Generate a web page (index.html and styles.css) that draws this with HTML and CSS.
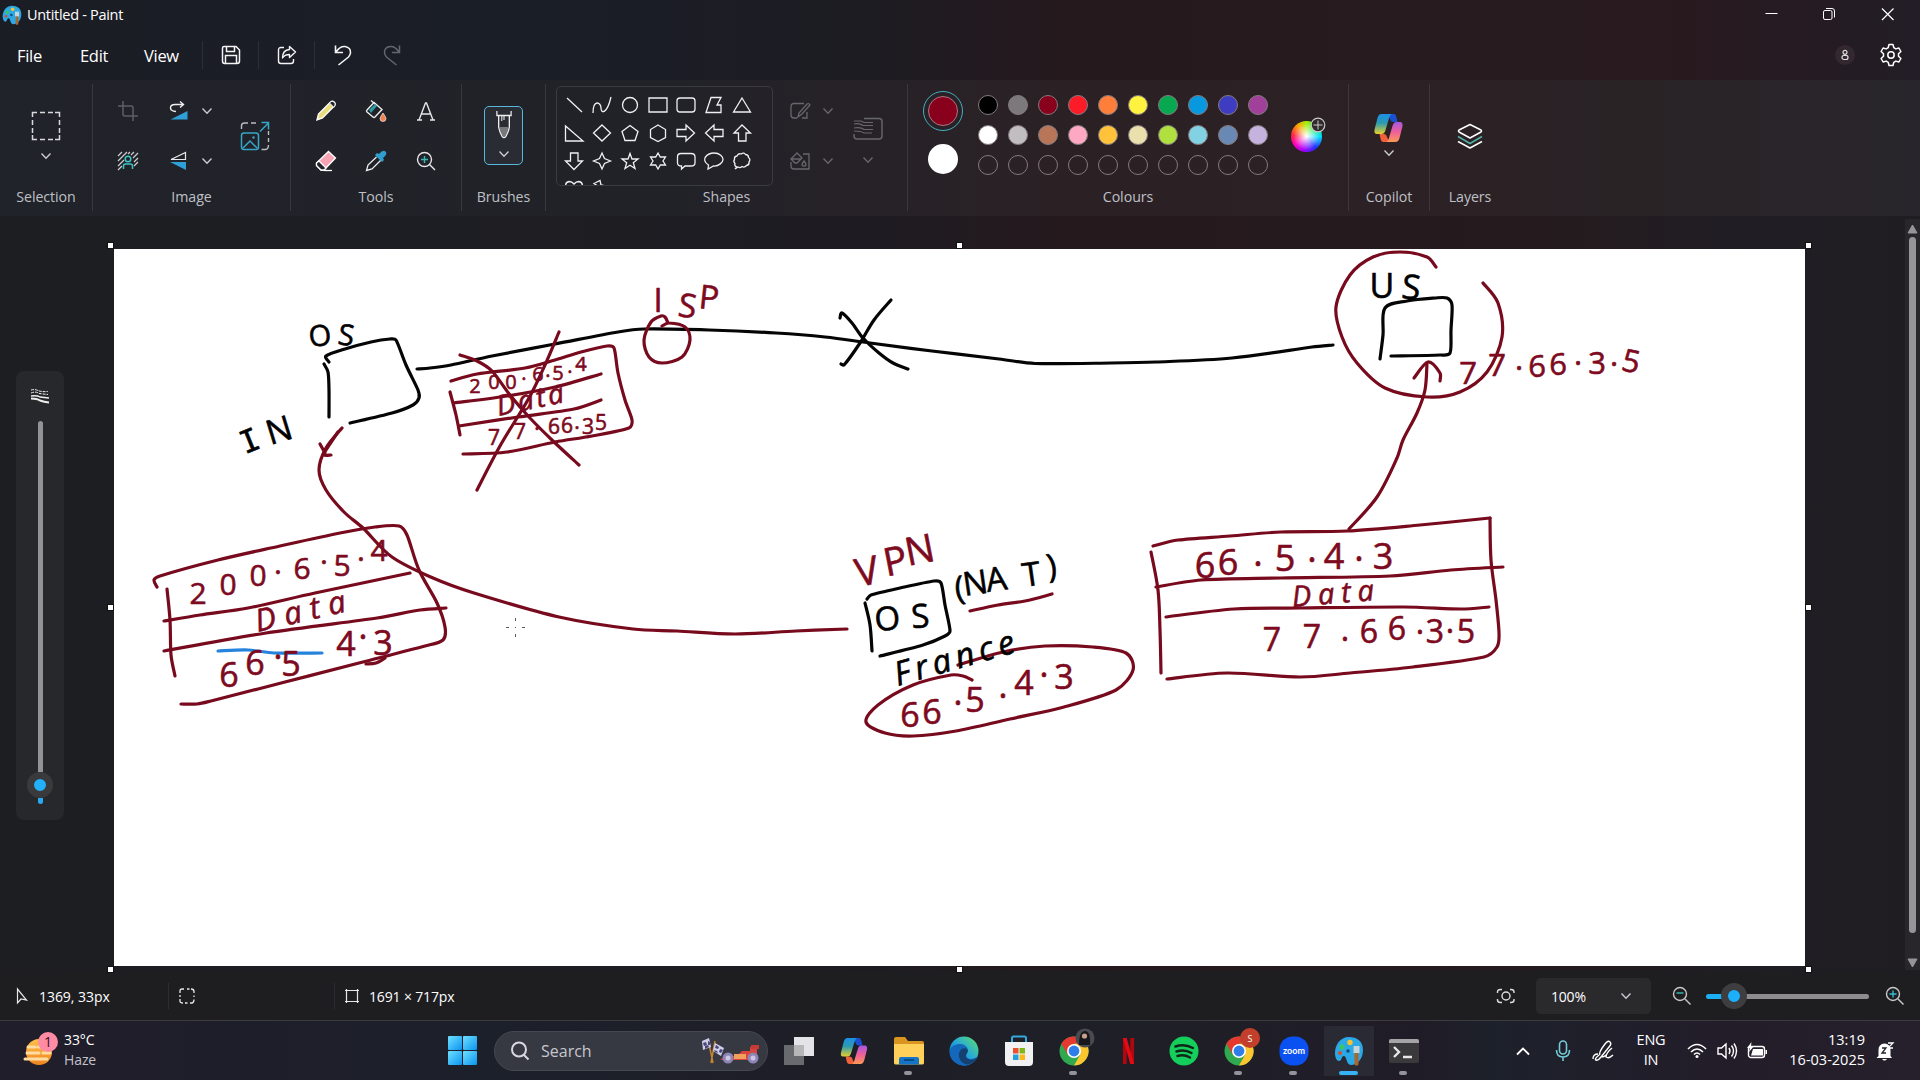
FILE: index.html
```html
<!DOCTYPE html>
<html lang="en">
<head>
<meta charset="utf-8">
<title>Untitled - Paint</title>
<link rel="stylesheet" href="styles.css">
</head>
<body>
<svg class="defs" width="0" height="0">
  <defs>
    <symbol id="chev" viewBox="0 0 12 12"><path d="M1.500 3.500 6 8.300l4.500-4.800" fill="none" stroke="currentColor" stroke-width="1.300"/></symbol>
    <linearGradient id="cpA" x1="0" y1="0" x2="0" y2="1"><stop offset="0" stop-color="#1b8fe8"/><stop offset=".45" stop-color="#2b9bb0"/><stop offset="1" stop-color="#e8d02c"/></linearGradient>
    <linearGradient id="cpB" x1="0" y1="0" x2="0" y2="1"><stop offset="0" stop-color="#a657e0"/><stop offset=".5" stop-color="#ef5f9a"/><stop offset="1" stop-color="#fb9a55"/></linearGradient>
    <symbol id="copilot" viewBox="0 0 30 30">
      <path d="M14 1h6c2 0 2.500 1.500 3 3.500L24 9h-4c-2 0-3-1-3.500-3z" fill="#1a4fd0"/>
      <path d="M16 29h-6c-2 0-2.500-1.500-3-3.500L6 21h4c2 0 3 1 3.500 3z" fill="#f0603a"/>
      <path d="M8 1h11c-2 0-3 2-4 6l-3 10c-1 3-2 4-4 4H4c-3 0-3.500-2-2.800-5L4 5c.7-2.500 2-4 4-4z" fill="url(#cpA)"/>
      <path d="M22 29H12c2 0 3-2 4-6l3-10c1-3 2-4 4-4h3c3 0 3.500 2 2.800 5L26 25c-.7 2.500-2 4-4 4z" fill="url(#cpB)"/>
    </symbol>
    <symbol id="palette" viewBox="0 0 30 30">
      <path d="M15 1C6 1 1 9 1 17c0 5 2 8 4 8 3 0 2-5 5-5s2 9 7 9c6 0 12-6 12-15S23 1 15 1z" fill="#2ba9e6"/>
      <circle cx="8" cy="11" r="2.700" fill="#3cc46a"/><circle cx="16" cy="6.500" r="2.700" fill="#f5c12e"/><circle cx="6" cy="17" r="2" fill="#d44d2c"/><circle cx="14" cy="15" r="1.800" fill="#114a78"/>
      <path d="M20.500 16h4V28c0 2-4 2-4 0z" fill="#a8672f"/><path d="M19.500 10h6v7h-6z" fill="#c9d3da"/>
    </symbol>
    <symbol id="chrome" viewBox="0 0 30 30">
      <circle cx="15" cy="15" r="14.500" fill="#2fa84f"/>
      <path d="M15 .5A14.500 14.500 0 0 1 27.600 7.700H15L8.700 18.600 2.400 7.700A14.500 14.500 0 0 1 15 .5z" fill="#e5392f"/>
      <path d="M27.600 7.700A14.500 14.500 0 0 1 15 29.500l6.300-10.900L15 7.700z" fill="#fbc62e"/>
      <circle cx="15" cy="15" r="7" fill="#fff"/><circle cx="15" cy="15" r="5.400" fill="#2f7de8"/>
    </symbol>
    <linearGradient id="win" x1="0" y1="0" x2="1" y2="1"><stop offset="0" stop-color="#6fe0ff"/><stop offset="1" stop-color="#0a93f0"/></linearGradient>
    <linearGradient id="edge" x1="0" y1="1" x2="1" y2="0"><stop offset="0" stop-color="#0d5cb8"/><stop offset=".5" stop-color="#25a7dc"/><stop offset="1" stop-color="#5fe06a"/></linearGradient>
    <linearGradient id="sun" x1="0" y1="0" x2="0" y2="1"><stop offset="0" stop-color="#ffc04a"/><stop offset="1" stop-color="#ee8420"/></linearGradient>
  </defs>
</svg>

<div class="window">
  <header class="titlebar">
    <svg class="logo" width="20" height="20"><use href="#palette"/></svg>
    <span class="title">Untitled - Paint</span>
    <div class="winbtns">
      <svg width="58" height="28" viewBox="0 0 58 28"><path d="M23.500 13.500h12" stroke="#fff" fill="none"/></svg>
      <svg width="58" height="28" viewBox="0 0 58 28" fill="none" stroke="#fff"><rect x="23.500" y="10.500" width="8.500" height="9" rx="1.500"/><path d="M26 8.500h6q2.500 0 2.500 2.500v6.500"/></svg>
      <svg width="58" height="28" viewBox="0 0 58 28"><path d="m24 8.500 11.500 11.500M35.500 8.500 24 20" stroke="#fff" stroke-width="1.200" fill="none"/></svg>
    </div>
  </header>

  <nav class="menubar">
    <span class="menu m-file">File</span><span class="menu m-edit">Edit</span><span class="menu m-view">View</span>
    <div class="quick"><svg width="20" height="20" viewBox="0 0 20 20" fill="none" stroke="#f4f4f6" stroke-width="1.500"><path d="M3 1.500h12L18.500 5v11q0 2.500-2.500 2.500H3.500Q1.500 18.500 1.500 16V3.500Q1.500 1.500 3 1.500z"/><path d="M5.500 2v4.500h8V2M4.500 18v-7.500h11V18"/></svg></div>
    <div class="quick"><svg width="20" height="20" viewBox="0 0 20 20" fill="none" stroke="#f4f4f6" stroke-width="1.400" stroke-linejoin="round"><path d="M7 2.500H4Q1.500 2.500 1.500 5v11q0 2.500 2.500 2.500h10q2.500 0 2.500-2.500v-2"/><path d="M12.500 1.500 18.500 7l-6 5.500V9.500q-5 0-7 3.500 0-8 7-8.500z"/></svg></div>
    <div class="quick"><svg width="20" height="22" viewBox="0 0 20 22" fill="none" stroke="#f4f4f6" stroke-width="1.600"><path d="M2.500 1.500v7H10M3 8Q7 2 12 2.500q6 1 5.500 6.500-.3 2-2 4L5.500 21"/></svg></div>
    <div class="quick redo"><svg width="20" height="22" viewBox="0 0 20 22" fill="none" stroke="#65666d" stroke-width="1.500"><path d="M17.500 1.500v7H10M17 8Q13 2 8 2.500q-6 1-5.500 6.500.3 2 2 4l10 8"/></svg></div>
    <div class="account">
      <span class="avatar"><svg width="10" height="12" viewBox="0 0 10 12" fill="none" stroke="#ddd" stroke-width="1.200"><circle cx="5" cy="3.300" r="2"/><rect x="2" y="6.300" width="6" height="4.200" rx="2"/></svg></span>
      <svg width="22" height="24" viewBox="0 0 22 24" fill="none" stroke="#fff" stroke-width="1.500" stroke-linejoin="round"><path d="M9 1.500h4l.8 3.200 2 1.200 3.100-.9 2 3.500-2.400 2.300v2.400l2.400 2.300-2 3.500-3.100-.9-2 1.200-.8 3.200H9l-.8-3.200-2-1.200-3.100.9-2-3.500 2.400-2.300v-2.400L1.100 8.500l2-3.500 3.100.9 2-1.200z"/><circle cx="11" cy="12" r="3.200"/></svg>
    </div>
  </nav>

  <section class="ribbon">
    <div class="group g-selection">
      <div class="body stack">
        <svg width="30" height="30" viewBox="0 0 30 30" fill="none" stroke="#d8d9dc" stroke-width="1.500"><path d="M1.500 6V1.500H6M24 1.500h4.500V6M28.500 24v4.500H24M6 28.500H1.500V24"/><path d="M9 1.500h5m3 0h5M9 28.500h5m3 0h5M1.500 9v5m0 3v5M28.500 9v5m0 3v5"/></svg>
        <svg class="chev"><use href="#chev"/></svg>
      </div>
      <div class="label">Selection</div>
    </div>

    <div class="group g-image">
      <div class="body">
        <svg width="20" height="20" viewBox="0 0 20 20" fill="none" stroke="#5e5f66" stroke-width="1.500"><path d="M5 0v13q0 2 2 2h13M0 5h13q2 0 2 2v13"/></svg>
        <svg width="20" height="20" viewBox="0 0 20 20"><path d="M7 10.500Q1.500 10 1.500 7 1.500 3.500 6 3.500h8M11 .5l3.500 3L11 6.500" fill="none" stroke="#eee" stroke-width="1.400"/><path d="M1.500 18.500 18.500 10v8.500z" fill="#2f9fd8"/></svg>
        <svg class="chev"><use href="#chev"/></svg>
        <svg class="resize" width="30" height="30" viewBox="0 0 30 30" fill="none"><path d="M1.500 8V5q0-3 3-3H8m3 0h5m12.500 8v4m0 3v4m0 3q0 4-3 4.500h-4" stroke="#bbbcc0" stroke-width="1.400"/><rect x="1.500" y="12" width="17" height="16.500" rx="2.500" stroke="#35a6c8" stroke-width="1.500"/><path d="m3 27 7-7 7 7" stroke="#35a6c8" stroke-width="1.500"/><circle cx="13.500" cy="16.500" r="1.200" fill="#35a6c8"/><path d="M20 10.500 28.500 2M21.500 1.500h7v7" stroke="#35a6c8" stroke-width="1.500"/></svg>
        <svg width="22" height="20" viewBox="0 0 22 20" fill="none"><path d="M1 5 5 1M1 10l9-9M1 15l6-6M1 19l4-4M11 3l2-2M14 4l3-3M16 7l5-5M17 11l4-4M17 15l4-4" stroke="#cfcfd2" stroke-width="1.200"/><circle cx="11" cy="8" r="2.800" stroke="#3cc6c4" stroke-width="1.500"/><path d="M6.500 18v-3q0-2 2-2h5q2 0 2 2v3" stroke="#3cc6c4" stroke-width="1.500"/></svg>
        <svg width="20" height="20" viewBox="0 0 20 20"><path d="M16.500 1.500v7H2z" fill="none" stroke="#e8e8ea" stroke-width="1.200"/><path d="M1 11h16v8z" fill="#2f9fd8"/></svg>
        <svg class="chev"><use href="#chev"/></svg>
      </div>
      <div class="label">Image</div>
    </div>

    <div class="group g-tools">
      <div class="body">
        <svg width="22" height="22" viewBox="0 0 22 22"><path d="m2 20 1.500-6L15.500 2q2-1.500 3.700 0t.3 3.800L7.500 18z" fill="#e9dc7a" stroke="#fff" stroke-width="1.400"/><path d="m14.500 3 4.300 4.300 1-1.300Q21 3.500 19 2t-3.500 0z" fill="#22232a" stroke="#fff"/></svg>
        <svg width="22" height="22" viewBox="0 0 22 22"><path d="m2 10 7-7.500 8 7-7 7.500q-1 1-2 0l-6-5q-1-1 0-2z" fill="none" stroke="#eee" stroke-width="1.400"/><path d="m4 10 6-6 2 2-6 7z" fill="#2c9ba4"/><path d="M6 .5 10 4" stroke="#eee" stroke-width="1.300"/><path d="M18 13q3 4 3 5.500a3 3 0 0 1-6 0Q15 17 18 13z" fill="#ee8452" stroke="#fff" stroke-width=".6"/></svg>
        <svg width="20" height="20" viewBox="0 0 20 20" fill="none" stroke="#e6e6e8" stroke-width="1.400"><path d="M3 19 9.500 2h1L17 19M5.500 13h9M1 19h5M14 19h5"/></svg>
        <svg width="22" height="22" viewBox="0 0 22 22"><path d="M13.500 1.500 20.500 8 9 20H6L1.500 15.500V13z" fill="#f8a3b4" stroke="#fff" stroke-width="1.300"/><path d="M4 11 11 18l-2 2H6L1.500 15.500V13z" fill="#22232a" stroke="#fff" stroke-width="1.300"/><path d="M9 20.500h8" stroke="#fff" stroke-width="1.300"/></svg>
        <svg width="22" height="22" viewBox="0 0 22 22"><path d="m12 3 2 1q4-5 6.500-2.500T18 8l1 2-2 2-7-7z" fill="#2f9fd0"/><path d="M11.500 7 3 15l-1.500 5.500L7 19l8.500-8.500" fill="none" stroke="#eee" stroke-width="1.300"/></svg>
        <svg width="20" height="20" viewBox="0 0 20 20" fill="none" stroke="#e6e6e8" stroke-width="1.400"><circle cx="8.500" cy="8.500" r="7"/><path d="m13.500 13.500 5.500 5.500"/><path d="M5 8.500h7M8.500 5v7" stroke="#38b8b4"/></svg>
      </div>
      <div class="label">Tools</div>
    </div>

    <div class="group g-brushes">
      <div class="body"><div class="brush">
        <svg width="16" height="28" viewBox="0 0 18 28" preserveAspectRatio="none"><path d="M1 0v4.500h16V0" fill="none" stroke="#eee" stroke-width="1.400"/><path d="M3 5v11q1 5 4 9.500 2 2 4 0 3-4.500 4-9.500V5" fill="none" stroke="#eee" stroke-width="1.500"/><path d="M3.500 16h11q-1 4-4 9-1.500 1.500-3 0-3-5-4-9z" fill="#77787c"/><path d="M6.500 5v5M9 5v4" stroke="#ddd" stroke-width="1.300"/></svg>
        <svg class="chev"><use href="#chev"/></svg>
      </div></div>
      <div class="label">Brushes</div>
    </div>

    <div class="group g-shapes">
      <div class="body">
        <div class="gallery">
          <svg viewBox="0 0 28 28"><path d="m7 7 15 14"/></svg>
          <svg viewBox="0 0 28 28"><path d="M5 22c0-14 8-11 8-5s6 6 10-11"/></svg>
          <svg viewBox="0 0 28 28"><circle cx="14" cy="14" r="7.500"/></svg>
          <svg viewBox="0 0 28 28"><path d="M5 7h18v14H5z"/></svg>
          <svg viewBox="0 0 28 28"><rect x="5" y="7" width="18" height="14" rx="3"/></svg>
          <svg viewBox="0 0 28 28"><path d="M11 6.500h10l-4 7.500h4v7.500H6z"/></svg>
          <svg viewBox="0 0 28 28"><path d="m14 7 8.500 14h-17z"/></svg>
          <svg viewBox="0 0 28 28"><path d="M5.500 7v15H23z"/></svg>
          <svg viewBox="0 0 28 28"><path d="m14 6 8.500 8-8.500 8-8.500-8z"/></svg>
          <svg viewBox="0 0 28 28"><path d="m14 6.500 8 6-3 9H9l-3-9z"/></svg>
          <svg viewBox="0 0 28 28"><path d="m14 6 7.500 4.500v8L14 22.500 6.500 18.500v-8z"/></svg>
          <svg viewBox="0 0 28 28"><path d="M5 10.500h9V6l8.500 8-8.500 8v-4.500H5z"/></svg>
          <svg viewBox="0 0 28 28"><path d="M23 10.500h-9V6L5.500 14l8.500 8v-4.500h9z"/></svg>
          <svg viewBox="0 0 28 28"><path d="M10.500 22v-8H6l8-8 8.500 8H18v8z"/></svg>
          <svg viewBox="0 0 28 28"><path d="M10.500 6v8H5.500l8.500 8.500 8.500-8.500h-4.500V6z"/></svg>
          <svg viewBox="0 0 28 28"><path d="m14 6 2.500 5.500 6 2.500-6 2.500L14 22l-2.500-5.500-6-2.500 6-2.500z"/></svg>
          <svg viewBox="0 0 28 28"><path d="m14 6.500 2 5.500h6l-4.700 3.700 1.700 5.800-5-3.300-5 3.300 1.700-5.800L6 12h6z"/></svg>
          <svg viewBox="0 0 28 28"><path d="m14 6 2.300 4H21.500L19 14l2.500 4H16.300L14 22l-2.300-4H6.500L9 14l-2.500-4h5.200z"/></svg>
          <svg viewBox="0 0 28 28"><path d="M9 6.500h10q4 0 4 3.500v6q0 3-4 3h-6l-3.500 3V19Q5.500 19 5.500 16v-6q0-3.500 3.500-3.500z"/></svg>
          <svg viewBox="0 0 28 28"><path d="M8.500 18C-.5 12 8 6 14 6s9 4 9 6.500-4 7-9.500 6.500L8 22z"/></svg>
          <svg viewBox="0 0 28 28"><path d="M9 20q-3-1-2-3.500-2-2-.5-4Q6 9.500 9 9q1-3 4-2 3-2 4.500.5 3 0 3 3 2.500 2 .5 4.500.5 3-2.500 3.500-2 2.500-4.500 1-2 2-4 .5L7 22z"/></svg>
          <svg viewBox="0 0 28 28"><path d="M14 20 5.500 11q0-4 3.500-4.500 3 0 5 2.500 2-2.500 5-2.500 3.500.5 3.500 4.500z"/></svg>
          <svg viewBox="0 0 28 28"><path d="m6 8.500 6-3 1 4.500 3 .5 1 3 4 5-9-5-3-3z"/></svg>
        </div>
        <div class="shape-opts">
          <svg width="20" height="18" viewBox="0 0 20 18" fill="none" stroke="currentColor" stroke-width="1.300"><path d="M14 1.500H4Q1 1.500 1 4.500V13q0 3 3 3h3M17 10v6h-5M8 15l1-4 8-9q2-1 3 1l-8 9z"/></svg>
          <svg class="chev"><use href="#chev"/></svg>
          <svg width="20" height="18" viewBox="0 0 20 18" fill="none" stroke="currentColor" stroke-width="1.300"><path d="M1 10v4q0 3 3 3h15V2h-6M1 7l6-6 5 5-5 5H5zM1 7h10M14 9q4 5 0 5t0-5z"/></svg>
          <svg class="chev"><use href="#chev"/></svg>
        </div>
        <div class="size stack">
          <svg width="30" height="24" viewBox="0 0 30 24" fill="none" stroke="currentColor" stroke-width="1.400"><path d="M11 1.500h15q3 0 3 3V19q0 3-3 3H4q-3 0-3-3v-2"/><path d="M1 4h7l3 1.500h9M1 7q6-1 9 1.500h10M1 11q7-1 10 1.500h9M1 14q7 0 10 2h8" stroke-width="1.200"/></svg>
          <svg class="chev"><use href="#chev"/></svg>
        </div>
      </div>
      <div class="label">Shapes</div>
    </div>

    <div class="group g-colours">
      <div class="body">
        <div class="current"><span class="c1"><i></i></span><span class="c2"></span></div>
        <div class="palette">
          <i class="k0"></i><i class="k1"></i><i class="k2"></i><i class="k3"></i><i class="k4"></i><i class="k5"></i><i class="k6"></i><i class="k7"></i><i class="k8"></i><i class="k9"></i>
          <i class="k10"></i><i class="k11"></i><i class="k12"></i><i class="k13"></i><i class="k14"></i><i class="k15"></i><i class="k16"></i><i class="k17"></i><i class="k18"></i><i class="k19"></i>
          <i></i><i></i><i></i><i></i><i></i><i></i><i></i><i></i><i></i><i></i>
        </div>
        <div class="wheel"><svg width="16" height="16" viewBox="0 0 16 16"><circle cx="8" cy="8" r="6.800" fill="#32292d" stroke="#c9c9c9" stroke-width="1.200"/><path d="M3.500 8h9M8 3.500v9" stroke="#c9c9c9"/></svg></div>
      </div>
      <div class="label">Colours</div>
    </div>

    <div class="group g-copilot">
      <div class="body stack"><svg width="31" height="30"><use href="#copilot"/></svg><svg class="chev"><use href="#chev"/></svg></div>
      <div class="label">Copilot</div>
    </div>
    <div class="group g-layers">
      <div class="body"><svg width="26" height="26" viewBox="0 0 26 26" fill="none" stroke="#fff" stroke-width="1.500" stroke-linejoin="round"><path d="M13 1.500 24 7q1 1 0 2L13 15 2 9q-1-1 0-2z"/><path d="m1 13.500 12 7 12-7" stroke="#4fb3a4"/><path d="m1 18.500 12 6.500 12-6.500"/></svg></div>
      <div class="label">Layers</div>
    </div>
  </section>

  <main class="workspace">
    <aside class="sizer">
      <svg width="20" height="16" viewBox="0 0 20 16" fill="none" stroke="#eee"><path d="M1 2q4-1 7 .5t10 1M1 5q5-2 8 .5l9 1" stroke-width="1" stroke-dasharray="3 1"/><path d="M1 8q6-1 9 1l9 1" stroke-width="1.500"/><path d="M1 10.500q6 0 9 2 4 1.500 9 2" stroke-width="2"/></svg>
      <div class="vtrack"></div>
      <div class="thumb"></div>
      <div class="vfill"></div>
    </aside>

    <div class="sheet">
      <svg id="ink" width="1691" height="717" viewBox="114 249 1691 717">
        <g id="strokes"></g>
        <g class="hand black">
          <text x="321 345" y="347 344" rotate="-6 8" font-size="29">OS</text>
          <text class="serif" transform="rotate(-22 253 449)" x="253" y="451" font-size="31">I</text>
          <text transform="rotate(-17 284 443)" x="283" y="441" font-size="34">N</text>
          <text x="1382 1410" y="298 298" rotate="0 6" font-size="34">US</text>
          <text transform="rotate(-4 888 630)" x="888 921" y="630 630" font-size="33">OS</text>
          <text x="961 977 998 1033 1053" y="600 596 592 587 578" rotate="-8" font-size="33">(NAT)</text>
          <text class="start" transform="rotate(-16 898 687)" x="898" y="686" font-size="33" font-style="italic" textLength="124">France</text>
        </g>
        <g class="hand red">
          <text x="658 686 708" y="312 316 308" rotate="0 8 6" font-size="33">ISP</text>
          <text transform="rotate(-11 893 570)" x="867 897 923" y="580 575 569" font-size="39">VPN</text>
          <text x="475 494 511 524 538 548 558 570 581" y="393 389 389 380 381 377 380 373 371" font-size="20">200.6.5.4</text>
          <text class="start" transform="rotate(-12 499 417)" x="499" y="416" font-size="28" font-style="italic" textLength="68">Data</text>
          <text x="494 520 537 554 567 577 588 596 601" y="445 439 430 434 433 429 434 428 430" font-size="21">77.66.3 5</text>
          <text x="198 228 258 278 302 324 342 361 379" y="604 595 586 574 579 564 576 561 561" font-size="30">200.6.5.4</text>
          <text class="start" transform="rotate(-13 258 633)" x="258" y="632" font-size="31" font-style="italic" textLength="92">Data</text>
          <text x="229 255 278 291 330 346 363 383" y="687 675 659 676 650 656 639 655" font-size="34">66.5 4.3</text>
          <text x="910 932 958 975 1003 1024 1044 1064" y="727 724 705 712 698 695 677 689" font-size="34">66.5.4.3</text>
          <text x="1205 1228 1258 1285 1312 1334 1359 1383" y="578 575 566 571 562 569 561 569" font-size="36">66.5.4.3</text>
          <text class="start" transform="rotate(-5 1294 609)" x="1293" y="607" font-size="29" font-style="italic" textLength="82">Data</text>
          <text x="1272 1312 1345 1369 1397 1420 1435 1450 1466" y="651 648 641 643 640 634 643 633 643" font-size="32">77.66.3.5</text>
          <text x="1468 1497 1519 1537 1558 1578 1597 1614 1629" y="384 376 370 377 375 365 374 366 370" rotate="0 0 0 0 0 0 0 0 12" font-size="31">77.66.3.5</text>
        </g>
      </svg>
      <i class="h tl"></i><i class="h tc"></i><i class="h tr"></i><i class="h ml"></i><i class="h mr"></i><i class="h bl"></i><i class="h bc"></i><i class="h br"></i>
    </div>

    <div class="scroll">
      <svg width="11" height="10" viewBox="0 0 11 10"><path d="M5.500 1 10 9H1z" fill="#96939a" stroke="#96939a" stroke-linejoin="round"/></svg>
      <div class="sthumb"></div>
      <svg width="11" height="10" viewBox="0 0 11 10"><path d="M5.500 9 10 1H1z" fill="#96939a" stroke="#96939a" stroke-linejoin="round"/></svg>
    </div>
  </main>

  <footer class="status">
    <div class="cell pos"><svg width="12" height="18" viewBox="0 0 12 18" fill="none" stroke="#e8e8ea" stroke-width="1.200"><path d="M1.500 2v14L5 12l5.500 1z"/></svg><span>1369, 33px</span></div>
    <div class="cell sel"><svg width="16" height="16" viewBox="0 0 16 16" fill="none" stroke="#e8e8ea" stroke-width="1.300"><path d="M1 5V3q0-2 2-2h2m3 0h2.500M12 1q3 0 3 2.500V5m0 2.500V9m0 2.500q0 3-2 3.500h-2M8.500 15H6M4 15q-3 0-3-2v-2M1 9V7"/></svg></div>
    <div class="cell dim"><svg width="16" height="16" viewBox="0 0 16 16" fill="none" stroke="#e8e8ea" stroke-width="1.200"><path d="M2.500 1v14M13.500 1v14M1 2.500h14M1 13.500h14"/></svg><span>1691 × 717px</span></div>
    <div class="zoomer">
      <svg class="fit" width="20" height="16" viewBox="0 0 20 16" fill="none" stroke="#ddd" stroke-width="1.400"><path d="M1.500 5V4q0-2.500 3-2.500H6M14 1.500h1q3 0 3 2.500v1M18 11v1q0 2.500-3 2.500h-1M6 14.500H4.500q-3 0-3-2.500v-1"/><circle cx="10" cy="8" r="4"/></svg>
      <div class="combo"><span>100%</span><svg class="chev"><use href="#chev"/></svg></div>
      <svg width="20" height="20" viewBox="0 0 20 20" fill="none" stroke="#c8c8cb" stroke-width="1.400"><circle cx="8" cy="8" r="6.500"/><path d="m13 13 5.500 5.500"/><path d="M4.500 7h7" stroke="#35bdb9"/></svg>
      <div class="slider"><i></i></div>
      <svg width="20" height="20" viewBox="0 0 20 20" fill="none" stroke="#c8c8cb" stroke-width="1.400"><circle cx="8" cy="8" r="6.500"/><path d="m13 13 5.500 5.500"/><path d="M4.500 8h7M8 4.500v7" stroke="#35bdd0"/></svg>
    </div>
  </footer>
</div>

<div class="taskbar">
  <div class="weather">
    <svg width="34" height="36" viewBox="0 0 34 36"><circle cx="15" cy="20" r="13" fill="url(#sun)"/><path d="M4 15h7m3 0h11M3 21h12m4 0h7M1 27h22" stroke="#ffdca0" stroke-width="3" stroke-linecap="round"/><circle cx="24" cy="10" r="10" fill="#ff8ba4"/><text x="24" y="15" class="badge-t">1</text></svg>
    <div><div class="temp">33°C</div><div class="haze">Haze</div></div>
  </div>
  <svg class="start-btn" width="29" height="29" viewBox="0 0 29 29" fill="url(#win)"><rect width="14" height="14" rx="1"/><rect x="15" width="14" height="14" rx="1"/><rect y="15" width="14" height="14" rx="1"/><rect x="15" y="15" width="14" height="14" rx="1"/></svg>
  <div class="search">
    <svg width="20" height="20" viewBox="0 0 20 20" fill="none" stroke="#d8d9de" stroke-width="2"><circle cx="9" cy="8.500" r="7"/><path d="m13.500 13.500 5 5"/></svg>
    <span>Search</span>
    <svg class="race" width="60" height="28" viewBox="0 0 60 28"><path d="M8 2l5 24M15 4l-4 22" stroke="#c8862f" stroke-width="1.500"/><g fill="#cfcdea"><path d="m2 4 7-3 2 9-8 3z"/><path d="m15 6 9 5-3 8-8-5z"/></g><path d="m3 6 3-1 1 3-3 1zm5-2 2 1 0 3-2 0zM5 9l3-1 1 2-4 2zM16 8l3 2-1 2-3-1zM20 12l3 1-2 3-2-1zM14 13l3 1 1 2-3-1z" fill="#4a4678"/><path d="M20 22 38 18l4-4h8v-4h7v9l-3 4H22z" fill="#d8433b"/><path d="M51 8h8v4h-8z" fill="#c63a35"/><path d="M34 17h12v5H34z" fill="#f0a05a"/><circle cx="28" cy="21" r="5.500" fill="#8d86b4"/><circle cx="28" cy="21" r="2.500" fill="#cdc7e4"/><circle cx="53" cy="21" r="5.500" fill="#8d86b4"/><circle cx="53" cy="21" r="2.500" fill="#cdc7e4"/></svg>
  </div>
  <div class="apps">
    <div class="app"><svg width="30" height="30" viewBox="0 0 30 30"><path d="M10 1h20v19H10z" fill="#e4e3e8"/><path d="M0 9h20v20H0z" fill="#77787b" fill-opacity=".85"/><path d="M10 9h10v11H10z" fill="#b7b6b9"/></svg></div>
    <div class="app"><svg width="30" height="28"><use href="#copilot"/></svg></div>
    <div class="app run"><svg width="32" height="30" viewBox="0 0 32 30"><path d="M1 3q0-2 2-2h9l3 4h14q2 0 2 2v8H1z" fill="#d9951f"/><path d="M1 8h30v19q0 1.500-2 1.500H3Q1 28.500 1 27z" fill="#ffd05a"/><path d="M6 28.500V23q0-2 2-2h16q2 0 2 2v5.500z" fill="#1374c8"/><path d="M11 24h10" stroke="#0a4a86" stroke-width="2"/></svg></div>
    <div class="app"><svg width="30" height="30" viewBox="0 0 30 30"><circle cx="15" cy="15" r="14.500" fill="url(#edge)"/><path d="M1 14C3 7 17 5 19 14c0 3-2 4-2 6 1 4 8 4 12 0-3 7-9 10-15 9.500C5 28 0 22 1 14z" fill="#1368bc"/><path d="M11 15c-3 5 0 12 7 13.500 4 0 8-3 10-7-6 4-11 2-11-2 0-2 2-3 2-5-2-4-7-2-8 .5z" fill="#15202f" fill-opacity=".55"/></svg></div>
    <div class="app"><svg width="30" height="32" viewBox="0 0 30 32"><path d="M8 8V3q0-1.500 1.500-1.500h11Q22 1.500 22 3v5" fill="none" stroke="#35a8dd" stroke-width="2"/><path d="M1 7h28v20q0 4-4 4H5q-4 0-4-4z" fill="#f1f1f4"/><path d="M9 13h5.500v5.500H9z" fill="#e94f30"/><path d="M15.500 13H21v5.500h-5.500z" fill="#7fb718"/><path d="M9 19.500h5.500V25H9z" fill="#1f9fe6"/><path d="M15.500 19.500H21V25h-5.500z" fill="#fbb818"/></svg></div>
    <div class="app run"><svg width="30" height="30"><use href="#chrome"/></svg><svg class="badge" width="20" height="20" viewBox="0 0 20 20"><circle cx="10" cy="10" r="9.500" fill="#4a4a50"/><path d="M4 17q0-14 6-14t5 14z" fill="#18181c"/><circle cx="9.500" cy="8" r="2.600" fill="#c9a08c"/></svg></div>
    <div class="app"><svg width="13" height="26" viewBox="0 0 14 22" preserveAspectRatio="none"><path d="M1 0h4v22H1zM9 0h4v22H9z" fill="#b30710"/><path d="M1 0h4l8 22H9z" fill="#e50a14"/></svg></div>
    <div class="app"><svg width="30" height="30" viewBox="0 0 30 30"><circle cx="15" cy="15" r="14.500" fill="#15cf5c"/><path d="M6.500 10.500q9-3 17.500 1.500M7.500 15.500q8-2.500 15 1.500M8.500 20q6.500-2 12.500 1.500" fill="none" stroke="#11251a" stroke-width="2.500" stroke-linecap="round"/></svg></div>
    <div class="app run"><svg width="30" height="30"><use href="#chrome"/></svg><svg class="badge" width="20" height="20" viewBox="0 0 20 20"><circle cx="10" cy="10" r="10" fill="#c2402b"/><text x="10" y="13.500" class="s-t">S</text></svg></div>
    <div class="app run"><svg width="30" height="30" viewBox="0 0 30 30"><rect x=".5" y=".5" width="29" height="29" rx="13" fill="#0b50f0"/><text x="15" y="18" class="zoom-t">zoom</text></svg></div>
    <div class="app active"><svg width="30" height="30"><use href="#palette"/></svg></div>
    <div class="app run"><svg width="30" height="24" viewBox="0 0 30 24"><rect width="30" height="24" rx="2" fill="#3a3a3c"/><path d="M0 4V2q0-2 2-2h26q2 0 2 2v2z" fill="#a5a5a8"/><path d="m5 8 5 5-5 5M14 18h9" fill="none" stroke="#e6e6e6" stroke-width="2.400"/></svg></div>
  </div>
  <div class="tray">
    <svg class="t-up" width="16" height="10" viewBox="0 0 16 10"><path d="m2 8.500 6-6 6 6" fill="none" stroke="#fff" stroke-width="1.800"/></svg>
    <svg class="t-mic" width="16" height="22" viewBox="0 0 16 22" fill="none" stroke="#74cbd6" stroke-width="1.600"><rect x="4.500" y="1" width="7" height="13" rx="3.500"/><path d="M1.500 10q0 7 6.500 7t6.500-7M8 17v4"/></svg>
    <svg class="t-pen" width="22" height="22" viewBox="0 0 22 22" fill="none" stroke="#fff" stroke-width="1.400"><path d="M8 15Q6 13 13 4q3-4 5-2t-1 5l-8 10q-3 4-5 3t3-5M20 8q-6 5-6 9 3 2 7-2M6 14q-5 0-5 5M9 16q2 2 5-1"/></svg>
    <div class="lang"><div>ENG</div><div>IN</div></div>
    <svg class="t-wifi" width="20" height="16" viewBox="0 0 20 16" fill="none" stroke="#fff" stroke-width="1.600"><path d="M1 6q9-9 18 0M4 9q6-6 12 0M7 11.500q3-3 6 0"/><circle cx="10" cy="13.500" r="1.500" fill="#fff" stroke="none"/></svg>
    <svg class="t-vol" width="20" height="18" viewBox="0 0 20 18" fill="none" stroke="#fff" stroke-width="1.400"><path d="M1 6h3.500L9 2v14l-4.500-4H1zM12 6q2 3 0 6M14.500 3.500q4 5.500 0 11M17 1.500q5 7.500 0 15"/></svg>
    <svg class="t-bat" width="21" height="17" viewBox="0 0 21 17"><rect x="1.500" y="4.500" width="16" height="11" rx="2.500" fill="none" stroke="#fff" stroke-width="1.400"/><path d="M6 7h10v6.500H4zM18.500 8H20v4h-1.500z" fill="#fff"/><path d="M4.500 0 0 6h3L2 10l5-6H4z" fill="#fff"/></svg>
    <div class="clock"><div>13:19</div><div>16-03-2025</div></div>
    <svg class="t-bell" width="19" height="20" viewBox="0 0 19 20"><path d="M2.500 15V9q0-6 6-6.500 6 .5 6 6.500v6l1.500 2H.5zM6 18h5q-2.500 3-5 0z" fill="#fff"/><path d="M6 7h4l-4 5h4" fill="none" stroke="#23202c" stroke-width="1.300"/><path d="M12 2h5l-5 5h5" fill="none" stroke="#fff" stroke-width="1.300"/></svg>
  </div>
</div>
<script src="ink.js"></script>
</body>
</html>
```
FILE: styles.css
```css
* { box-sizing: border-box; }
body { margin: 0; width: 1920px; height: 1080px; overflow: hidden; display: flex; flex-direction: column; font-family: "Open Sans", "Noto Sans", sans-serif; color: #fff; background: #1d1e22; }
svg { display: block; flex: none; overflow: visible; }
.defs { position: absolute; }
.chev { width: 12px; height: 12px; color: #cfcfd3; }
.window { height: 1021px; display: flex; flex-direction: column; background: linear-gradient(90deg, #1b1d24 0, #1a1e27 28%, #1d1c23 45%, #26191d 56%, #271b1f 78%, #28191f 88%, #221d26 100%); border-bottom: 1px solid #3c3b40; }
.titlebar { height: 30px; display: flex; align-items: center; padding-left: 2px; font-size: 14.500px; }
.title { margin-left: 5px; letter-spacing: -.3px; line-height: 28px; }
.winbtns { display: flex; margin-left: auto; height: 30px; padding-right: 4px; }
.menubar { height: 50px; display: flex; align-items: center; padding-bottom: 1px; font-size: 16.500px; }
.menu { letter-spacing: -.3px; line-height: 50px; margin-top: 2px; }
.m-file { padding-left: 17px; width: 80px; }
.m-edit { width: 64px; }
.m-view { width: 58px; }
.quick { width: 56px; height: 28px; border-left: 1px solid #2d2f37; display: flex; align-items: center; justify-content: center; }
.redo { border: 0; width: 44px; }
.account { margin-left: auto; display: flex; align-items: center; gap: 25px; padding-right: 18px; }
.avatar { width: 20px; height: 20px; border-radius: 50%; background: #33282f; display: flex; align-items: center; justify-content: center; }

.ribbon { height: 136px; display: flex; background: linear-gradient(90deg, #21232a 0, #212228 35%, #262228 44%, #2b2125 56%, #2c2125 75%, #292427 88%, #28252c 100%); }
.group { height: 136px; display: flex; flex-direction: column; background: linear-gradient(#3a383e, #3a383e) right 4px / 1px 127px no-repeat; }
.g-layers { background: none; width: 81px; }
.body { height: 106px; padding-top: 6px; }
.label { text-align: center; font-size: 14.200px; line-height: 22px; color: #bfc0c5; letter-spacing: -.05px; padding-right: 1px; }
.stack { display: flex; flex-direction: column; align-items: center; }
.g-selection { width: 93px; }
.g-selection .stack { padding: 31px 1px 0 0; gap: 9px; }
.g-image { width: 198px; }
.g-image .body { display: grid; grid-template-columns: 70px 31px 25px 72px; grid-template-rows: 50px 50px; place-items: center; }
.resize { grid-row: 1 / 3; grid-column: 4; }
.g-tools { width: 171px; }
.g-tools .body { display: grid; grid-template: 50px 50px / 50px 50px 50px; place-items: center; justify-content: center; padding-right: 2px; }
.g-brushes { width: 84px; }
.g-brushes .body { padding-top: 26px; display: flex; justify-content: center; }
.brush { width: 39px; height: 59px; border: 1.500px solid #58b8dc; border-radius: 5px; background: #2a2c34; display: flex; flex-direction: column; align-items: center; padding-top: 4px; gap: 9px; margin-right: 1px; }
.g-shapes { width: 362px; }
.g-shapes .body { display: flex; color: #68676d; }
.gallery { margin-left: 10px; width: 217px; height: 100px; border: 1px solid #3a3a42; border-radius: 5px; display: grid; grid-template-columns: repeat(7, 28px); grid-auto-rows: 28px; padding: 4px 0 0 3px; overflow: hidden; align-content: start; }
.gallery svg { width: 28px; height: 28px; fill: none; stroke: #f0f0f2; stroke-width: 1.300; }
.g-shapes .chev { color: #68676d; }
.shape-opts { margin-left: 13px; display: grid; grid-template: 50px 50px / 28px 28px; place-items: center; }
.size { margin: 31px 0 0 11px; width: 30px; gap: 13px; }
.g-colours { width: 441px; }
.g-colours .body { display: flex; }
.current { width: 70px; padding-top: 5px; display: flex; flex-direction: column; align-items: center; gap: 13px; }
.c1 { width: 40px; height: 40px; border-radius: 50%; border: 1.500px solid #45aebf; display: flex; align-items: center; justify-content: center; }
.c1 i { width: 30px; height: 30px; border-radius: 50%; background: #88001b; border: 1px solid #a78; }
.c2 { width: 30px; height: 30px; border-radius: 50%; background: #fff; }
.palette { display: grid; grid-template-columns: repeat(10, 30px); grid-auto-rows: 30px; place-items: center; padding-top: 4px; margin-left: -5px; height: 94px; }
.palette i { width: 20px; height: 20px; border-radius: 50%; border: 1px solid #847a7e; }
.k0 { background: #000; } .k1 { background: #7c787b; } .k2 { background: #88001b; } .k3 { background: #fc1c28; } .k4 { background: #ff7f3a; }
.k5 { background: #fff340; } .k6 { background: #08a850; } .k7 { background: #0898e0; } .k8 { background: #3e3cc0; } .k9 { background: #a0409a; }
.k10 { background: #fff; } .k11 { background: #c1bdc1; } .k12 { background: #b87558; } .k13 { background: #ffa8c4; } .k14 { background: #ffc23a; }
.k15 { background: #eae0ae; } .k16 { background: #b0e040; } .k17 { background: #82d2e4; } .k18 { background: #6a88b4; } .k19 { background: #c6b2de; }
.wheel { margin: 35px 0 0 18px; width: 31px; height: 31px; border-radius: 50%; background: radial-gradient(circle, #fff 0, rgba(255,255,255,0) 62%), conic-gradient(#a8f000, #20f060 45deg, #00e0ff 90deg, #2030ff 140deg, #a000ff 190deg, #ff00c0 235deg, #ff2040 275deg, #ffa000 320deg, #a8f000); }
.wheel svg { margin: -4px 0 0 19px; }
.g-copilot { width: 81px; }
.g-copilot .stack { padding: 33px 2px 0 0; gap: 4px; }
.g-layers .body { padding: 43px 2px 0 0; display: flex; justify-content: center; }

.workspace { height: 754px; display: flex; background: linear-gradient(90deg, #1c1e22 0, #1d1e23 20%, #1e1c22 46%, #26191d 56%, #241b1e 82%, #201d24 90%, #1f1d22 100%); padding-top: 33px; }
.sizer { width: 48px; height: 449px; margin: 122px 50px 0 16px; border-radius: 8px; background: #27282b; display: flex; flex-direction: column; align-items: center; padding-top: 17px; }
.vtrack { width: 5px; height: 351px; background: #939396; border-radius: 3px 3px 0 0; margin-top: 17px; }
.thumb { width: 26px; height: 26px; border-radius: 50%; border: 7px solid #3a3a3c; background: #22b0f8; }
.vfill { width: 5px; height: 6px; background: #28aaf0; border-radius: 0 0 3px 3px; }
.sheet { position: relative; width: 1691px; height: 717px; background: #fff; }
.h { position: absolute; width: 5px; height: 5px; background: #fff; border: 1px solid #111; box-sizing: content-box; }
.tl { left: -7px; top: -7px; } .tc { left: 842px; top: -7px; } .tr { left: 1691px; top: -7px; }
.ml { left: -7px; top: 355px; } .mr { left: 1691px; top: 355px; }
.bl { left: -7px; top: 717px; } .bc { left: 842px; top: 717px; } .br { left: 1691px; top: 717px; }
.hand { font-family: "Open Sans", "Noto Sans", sans-serif; text-anchor: middle; stroke-width: .6; stroke-linejoin: round; }
.hand .start { text-anchor: start; }
.hand .serif { font-family: "DejaVu Sans Mono", monospace; }
.black { fill: #000; stroke: #000; }
.red { fill: #7d0a20; stroke: #7d0a20; }
.ink { fill: none; stroke-width: 3.200; stroke-linecap: round; stroke-linejoin: round; }
.ink-k { stroke: #050505; } .ink-r { stroke: #780a1e; } .ink-b { stroke: #2583dc; } .ink-c { stroke: #222; stroke-width: 1; stroke-linecap: butt; }
.scroll { margin: -30px 0 0 auto; width: 15px; display: flex; flex-direction: column; align-items: center; padding-top: 5px; height: 752px; background: #28252b; }
.sthumb { width: 7px; height: 696px; margin: 3px 0 25px; border-radius: 4px; background: #97939a; }

.status { height: 50px; display: flex; align-items: center; font-size: 14px; background: #1e1e21; padding-top: 2px; }
.cell { height: 26px; display: flex; align-items: center; border-right: 1px solid #2d2d31; letter-spacing: -.05px; }
.pos { width: 169px; padding-left: 16px; gap: 11px; }
.sel { width: 166px; padding-left: 10px; }
.dim { border: 0; padding-left: 9px; gap: 9px; letter-spacing: -.15px; }
.zoomer { margin-left: auto; display: flex; align-items: center; padding-right: 15px; }
.fit { margin-right: 20px; }
.combo { width: 115px; height: 36px; background: #2a292c; border-radius: 5px; display: flex; align-items: center; justify-content: space-between; padding: 0 19px 0 15px; margin-right: 21px; letter-spacing: -.2px; }
.slider { margin: 0 16px 0 14px; width: 163px; height: 5px; border-radius: 3px; background: linear-gradient(90deg, #1caff6 28px, #8f8c90 28px); display: flex; align-items: center; padding-left: 15px; }
.slider i { width: 26px; height: 26px; border-radius: 50%; border: 7px solid #3e3e41; background: #1cb0fa; }

.taskbar { height: 59px; display: flex; align-items: center; background: linear-gradient(90deg, #201e2a 0, #1e1e2a 12%, #1c202b 25%, #1e1e27 42%, #1f1f27 60%, #201c27 74%, #1d212b 78%, #231d2a 90%, #26202c 100%); }
.weather { width: 424px; padding-left: 24px; display: flex; gap: 6px; font-size: 14px; line-height: 20px; letter-spacing: -.1px; }
.weather > div { margin-top: -2px; }
.haze { color: #c2c2ca; }
.badge-t { font-size: 14px; text-anchor: middle; fill: #3a1020; }
.start-btn { margin: 0 17px 0 24px; }
.search { width: 274px; height: 40px; border-radius: 20px; background: #363842; border: 1px solid #454751; display: flex; align-items: center; padding: 0 7px 0 15px; font-size: 16px; color: #c6c7ce; gap: 11px; }
.race { margin-left: auto; }
.apps { display: flex; margin-left: 3px; }
.app { position: relative; width: 55px; height: 54px; display: flex; align-items: center; justify-content: center; border-radius: 5px; }
.app.run::after, .app.active::after { content: ""; position: absolute; bottom: 3px; left: 23px; width: 8px; height: 4px; border-radius: 2px; background: #92939b; }
.app.active { background: linear-gradient(#292a33, #292a33) center / 50px 50px no-repeat; }
.app.active::after { left: 18px; width: 19px; background: #36b2f4; }
.badge { position: absolute; left: 29px; top: 4px; }
.s-t { font-size: 9px; text-anchor: middle; fill: #fff; }
.zoom-t { font: bold 9px "Lato", sans-serif; text-anchor: middle; fill: #fff; }
.tray { margin-left: auto; display: flex; align-items: center; font-size: 14.500px; line-height: 20px; }
.tray > div { margin-top: -2px; }
.t-mic { margin-left: 24px; } .t-pen { margin-left: 21px; }
.tray .lang { width: 36px; margin: -2px 18px 0 19px; text-align: center; letter-spacing: -.2px; }
.t-vol { margin-left: 10px; } .t-bat { margin-left: 10px; }
.clock { width: 97px; text-align: right; }
.t-bell { margin: 0 25px 0 11px; }
```
FILE: ink.js
```js
// Freehand strokes on the sheet: [pen, x1, y1, x2, y2, ...]
const strokes = [
  ["k", 329,362, 326,356, 345,349, 371,342, 390,339, 396,340, 406,365, 418,390, 419,398, 413,405, 392,413, 350,423],
  ["k", 324,364, 328,372, 329,390, 329,417],
  ["k", 417,369, 430,368, 451,365, 492,356, 555,344, 618,332, 644,329, 709,330, 776,333, 825,337, 870,343, 932,351, 999,359, 1035,363.5, 1111,363, 1156,362, 1232,358, 1312,347, 1333,345],
  ["k", 840,318, 842,313, 852,323, 863,338, 879,353, 893,363, 908,369],
  ["k", 891,300, 874,320, 860,343, 844,365, 841,364],
  ["k", 1380,359, 1383,335, 1385,308, 1407,301, 1435,298, 1447,298, 1452,305, 1451,330, 1450,353, 1440,355, 1391,356],
  ["k", 865,603, 870,625, 872,651],
  ["k", 867,599, 871,595, 900,588, 934,581, 941,583, 945,605, 950,631, 945,636, 923,645, 880,656],
  ["r", 451,381, 477,374, 525,368, 555,360, 581,352, 607,346, 614,348, 618,373, 625,400, 632,420, 629,428, 592,436, 555,442, 507,452, 463,454],
  ["r", 450,392, 456,415, 460,435],
  ["r", 454,403, 507,396, 555,387, 601,374],
  ["r", 459,426, 518,417, 574,409, 601,400],
  ["r", 460,355, 477,361, 492,371, 510,395, 529,417, 553,441, 579,465],
  ["r", 559,332, 545,365, 529,398, 500,446, 477,490],
  ["r", 668,323, 665,317, 661,316, 651,322, 644,340, 649,357, 662,363, 682,357, 690,340, 685,327, 669,323, 662,326],
  ["r", 1436,267, 1427,257, 1400,252, 1373,257, 1350,275, 1336,307, 1342,337, 1357,363, 1385,388, 1427,397, 1460,392, 1487,372, 1502,337, 1498,303, 1483,283],
  ["r", 1349,529, 1377,497, 1397,458, 1403,440, 1417,413, 1425,390, 1427,363],
  ["r", 1414,378, 1428,362, 1440,373, 1440,381],
  ["r", 342,428, 326,448, 319,470, 326,490, 344,512, 363,528, 392,557, 433,578, 474,593, 559,617, 633,629, 677,631, 735,634, 796,631, 847,629],
  ["r", 338,432, 326,450, 324,455, 331,455],
  ["r", 320,444, 325,453],
  ["r", 157,587, 154,580, 160,576, 218,560, 280,546, 340,533, 375,527, 399,526, 407,535, 419,570, 437,603, 445,627, 443,640, 425,646, 359,663, 285,682, 211,701, 197,704, 181,704],
  ["r", 167,589, 170,620, 171,655, 175,676],
  ["r", 164,621, 200,615, 248,608, 315,593, 410,573],
  ["r", 164,651, 266,633, 377,618, 420,610, 446,608],
  ["r", 366,664, 376,663, 385,658],
  ["b", 218,651, 248,650, 274,653, 322,653],
  ["r", 970,611, 998,605, 1025,601, 1052,594],
  ["r", 958,665, 1003,652, 1045,646, 1093,647, 1126,653, 1133,670, 1116,690, 1064,707, 1010,719, 956,731, 913,736, 885,733, 866,722, 878,705, 913,685, 951,675, 963,676, 972,680],
  ["r", 1153,546, 1178,540, 1230,536, 1281,532, 1347,531, 1420,525, 1490,518],
  ["r", 1490,518, 1491,560, 1496,600, 1499,633, 1497,647, 1484,657, 1413,667, 1350,673, 1300,677, 1227,673, 1167,679],
  ["r", 1151,552, 1158,590, 1160,630, 1161,673],
  ["r", 1156,587, 1201,580, 1281,578, 1390,576, 1451,570, 1503,567],
  ["r", 1166,617, 1234,609, 1300,608, 1404,607, 1461,609, 1489,607],
  ["c", 515.5,618, 515.5,621], ["c", 515.5,634, 515.5,637],
  ["c", 506,627.5, 509,627.5], ["c", 522,627.5, 525,627.5], ["c", 515,627.5, 516,627.5]
];

// Smooth a list of points into a cubic path that passes through each one.
function smooth(c) {
  const p = [];
  for (let i = 0; i < c.length; i += 2) p.push([c[i], c[i + 1]]);
  let d = "M" + p[0];
  for (let i = 0; i < p.length - 1; i++) {
    const a = p[i - 1] || p[i], b = p[i], e = p[i + 1], f = p[i + 2] || e;
    const len = Math.hypot(e[0] - b[0], e[1] - b[1]);
    const k = (u, v) => Math.min(1 / 6, len / 3 / (Math.hypot(v[0] - u[0], v[1] - u[1]) || 1));
    const k1 = k(a, e), k2 = k(b, f);
    d += "C" + [b[0] + (e[0] - a[0]) * k1, b[1] + (e[1] - a[1]) * k1,
                e[0] - (f[0] - b[0]) * k2, e[1] - (f[1] - b[1]) * k2, e[0], e[1]];
  }
  return d;
}

const layer = document.getElementById("strokes");
for (const [pen, ...pts] of strokes) {
  const el = document.createElementNS("http://www.w3.org/2000/svg", "path");
  el.setAttribute("d", smooth(pts));
  el.setAttribute("class", "ink ink-" + pen);
  layer.appendChild(el);
}
```
